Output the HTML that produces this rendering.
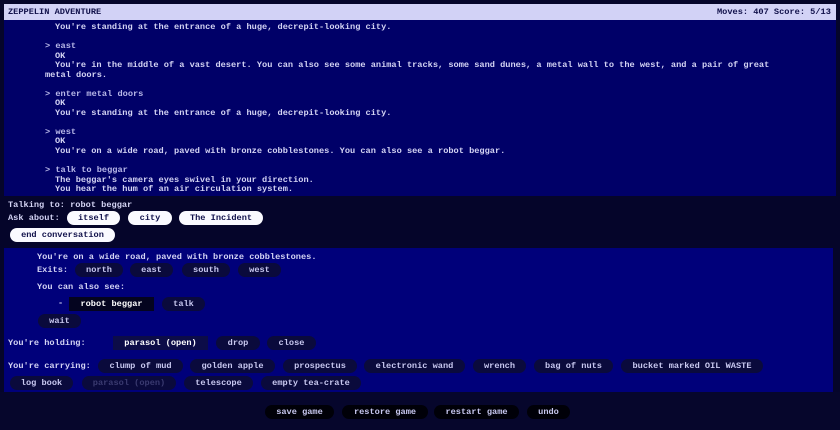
<!DOCTYPE html>
<html><head><meta charset="utf-8"><style>
*{margin:0;padding:0;box-sizing:border-box}
body{width:840px;height:430px;background:#05052a;font-family:"Liberation Mono",monospace;font-size:8.65px;font-weight:bold;color:#d4d4f4;position:relative;overflow:hidden}
.a{position:absolute;white-space:pre;line-height:10px}
#hdr{position:absolute;left:4px;top:4px;width:832px;height:16px;background:#d2d2f6;color:#10104a}
#tr{position:absolute;left:4px;top:20px;width:832px;height:176px;background:#000068}
#talk{position:absolute;left:4px;top:196px;width:832px;height:52px;background:#05052a}
#low{position:absolute;left:4px;top:248px;width:829px;height:144px;background:#00007a}
#bot{position:absolute;left:0;top:392px;width:840px;height:38px;background:#06062c}
.b{position:absolute;height:14px;line-height:14px;text-align:center;background:#0a0a3c;border-radius:7px;color:#c8c8f0}
.w{background:#fafaff;color:#10104a}
.s{border-radius:0;background:#04041f;color:#fff}
.h{border-radius:0;background:#0c0c48;color:#fff}
.f{color:#3a3a70}
.d{background:#000008}
</style></head><body>
<div id="hdr"></div>
<div id="tr"></div>
<div id="talk"></div>
<div id="low"></div>
<div id="bot"></div>
<div class="a" style="left:8px;top:7px;color:#10104a">ZEPPELIN ADVENTURE</div>
<div class="a" style="left:717px;top:7px;color:#10104a">Moves: 407 Score: 5/13</div>

<div class="a" style="left:55px;top:22px">You're standing at the entrance of a huge, decrepit-looking city.</div>
<div class="a" style="left:45px;top:41px;color:#b8b8e8">&gt; east</div>
<div class="a" style="left:55px;top:51px">OK</div>
<div class="a" style="left:55px;top:60px">You're in the middle of a vast desert. You can also see some animal tracks, some sand dunes, a metal wall to the west, and a pair of great</div>
<div class="a" style="left:45px;top:70px">metal doors.</div>
<div class="a" style="left:45px;top:89px;color:#b8b8e8">&gt; enter metal doors</div>
<div class="a" style="left:55px;top:98px">OK</div>
<div class="a" style="left:55px;top:108px">You're standing at the entrance of a huge, decrepit-looking city.</div>
<div class="a" style="left:45px;top:127px;color:#b8b8e8">&gt; west</div>
<div class="a" style="left:55px;top:136px">OK</div>
<div class="a" style="left:55px;top:146px">You're on a wide road, paved with bronze cobblestones. You can also see a robot beggar.</div>
<div class="a" style="left:45px;top:165px;color:#b8b8e8">&gt; talk to beggar</div>
<div class="a" style="left:55px;top:175px">The beggar's camera eyes swivel in your direction.</div>
<div class="a" style="left:55px;top:184px">You hear the hum of an air circulation system.</div>

<div class="a" style="left:8px;top:200px">Talking to: robot beggar</div>
<div class="a" style="left:8px;top:213px">Ask about:</div>
<div class="b w" style="left:67px;top:211px;width:53px">itself</div>
<div class="b w" style="left:128px;top:211px;width:44px">city</div>
<div class="b w" style="left:179px;top:211px;width:84px">The Incident</div>
<div class="b w" style="left:10px;top:228px;width:105px">end conversation</div>

<div class="a" style="left:37px;top:252px">You're on a wide road, paved with bronze cobblestones.</div>
<div class="a" style="left:37px;top:265px">Exits:</div>
<div class="b" style="left:75px;top:263px;width:48px">north</div>
<div class="b" style="left:130px;top:263px;width:43px">east</div>
<div class="b" style="left:182px;top:263px;width:48px">south</div>
<div class="b" style="left:238px;top:263px;width:43px">west</div>
<div class="a" style="left:37px;top:282px">You can also see:</div>
<div class="a" style="left:58px;top:298px">-</div>
<div class="b s" style="left:69px;top:297px;width:85px">robot beggar</div>
<div class="b" style="left:162px;top:297px;width:43px">talk</div>
<div class="b" style="left:38px;top:314px;width:43px">wait</div>

<div class="a" style="left:8px;top:338px">You're holding:</div>
<div class="b h" style="left:113px;top:336px;width:95px">parasol (open)</div>
<div class="b" style="left:216px;top:336px;width:44px">drop</div>
<div class="b" style="left:267px;top:336px;width:49px">close</div>

<div class="a" style="left:8px;top:361px">You're carrying:</div>
<div class="b" style="left:98px;top:359px;width:85px">clump of mud</div>
<div class="b" style="left:190px;top:359px;width:85px">golden apple</div>
<div class="b" style="left:283px;top:359px;width:74px">prospectus</div>
<div class="b" style="left:364px;top:359px;width:101px">electronic wand</div>
<div class="b" style="left:473px;top:359px;width:53px">wrench</div>
<div class="b" style="left:534px;top:359px;width:79px">bag of nuts</div>
<div class="b" style="left:621px;top:359px;width:142px">bucket marked OIL WASTE</div>
<div class="b" style="left:10px;top:376px;width:63px">log book</div>
<div class="b f" style="left:82px;top:376px;width:94px">parasol (open)</div>
<div class="b" style="left:184px;top:376px;width:69px">telescope</div>
<div class="b" style="left:261px;top:376px;width:100px">empty tea-crate</div>

<div class="b d" style="left:265px;top:405px;width:69px">save game</div>
<div class="b d" style="left:342px;top:405px;width:86px">restore game</div>
<div class="b d" style="left:434px;top:405px;width:85px">restart game</div>
<div class="b d" style="left:527px;top:405px;width:43px">undo</div>
</body></html>
